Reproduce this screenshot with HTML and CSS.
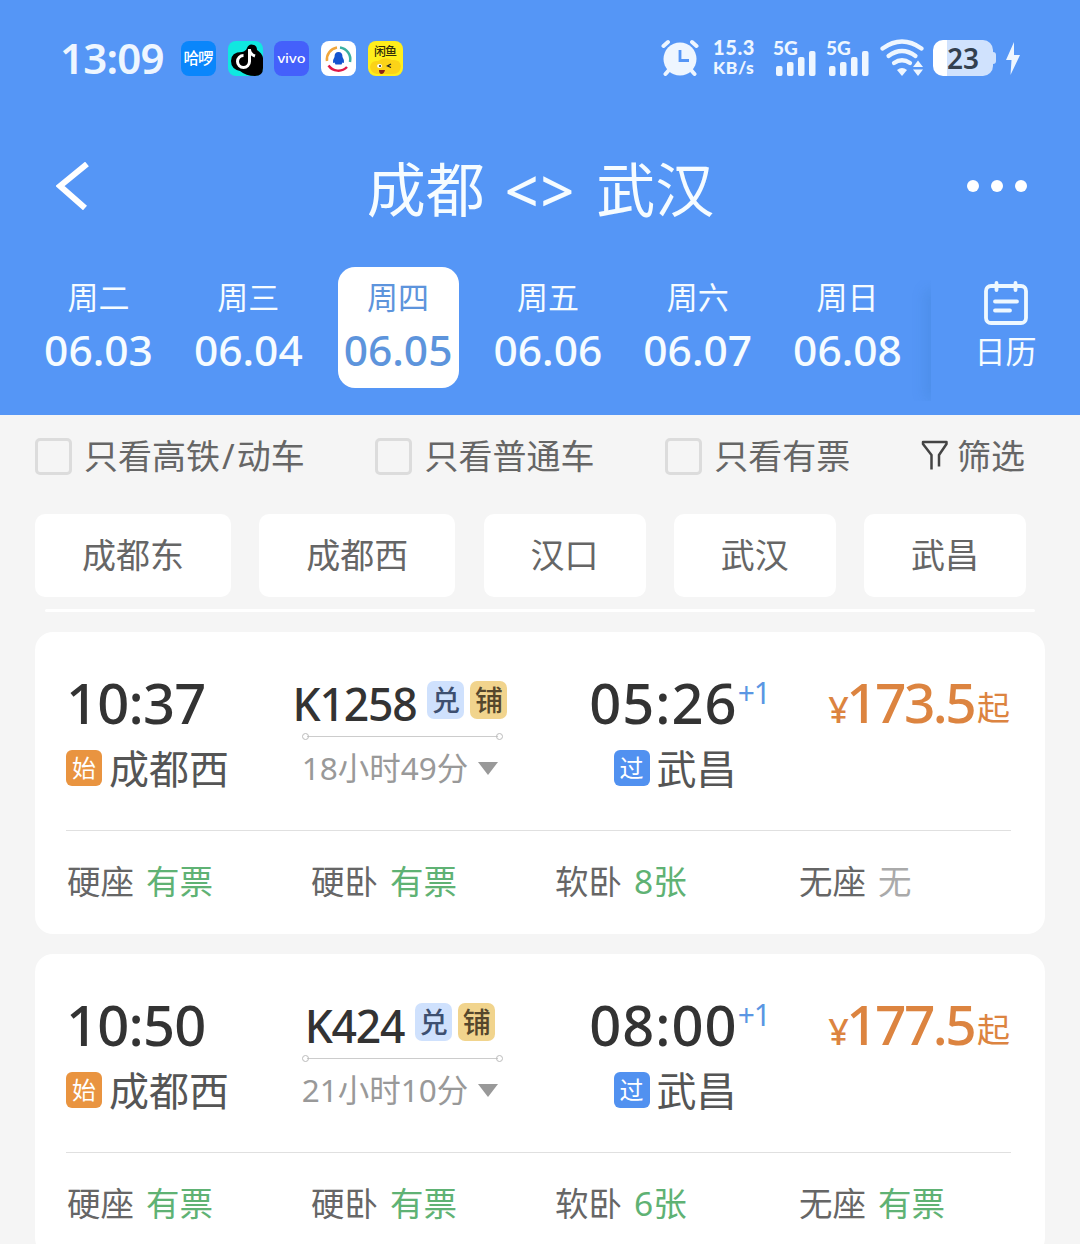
FILE: index.html
```html
<!DOCTYPE html>
<html lang="zh-CN">

<head>
    <meta charset="UTF-8">
    <meta name="viewport" content="width=device-width, initial-scale=1.0">
    <title>成都 - 武汉</title>
    <link rel="stylesheet" href="styles.css">
</head>

<body>
    <header class="header">
        <div class="status-bar">
            <span class="clock">13:09</span>
            <div class="apps">
                <svg class="app" viewBox="0 0 35 35">
                    <rect width="35" height="35" rx="8" fill="#0a86fb" />
                    <text x="17.5" y="23" class="app-text" font-size="15.5" textLength="30" fill="#fff">哈啰</text>
                </svg>
                <svg class="app" viewBox="0 0 35 35">
                    <rect width="35" height="35" rx="8" fill="#10e8e0" />
                    <path d="M19 7q2-5 7-3 3 1 3 5 5 3 6 8v10q0 8-8 8-9 0-15-5-9-2-9-10 0-9 11-9 4-1 5-4z" fill="#000" />
                    <path d="M21.500 8v12.500a6 6 0 1 1-6-6M21.500 9q1 4.500 5.500 6" fill="none" stroke="#fff" stroke-width="3" />
                </svg>
                <svg class="app" viewBox="0 0 35 35">
                    <rect width="35" height="35" rx="8" fill="#4460fb" />
                    <text x="17.5" y="21.500" class="app-text" font-size="12" textLength="28" lengthAdjust="spacingAndGlyphs" fill="#fff">vivo</text>
                </svg>
                <svg class="app" viewBox="0 0 35 35">
                    <rect width="35" height="35" rx="8" fill="#fff" />
                    <g fill="none" stroke-width="2.500">
                        <path d="M6 20A12 12 0 0 1 16 6.500" stroke="#f0a63c" />
                        <path d="M19 6.500A12 12 0 0 1 29 21" stroke="#39b0a2" />
                        <path d="M7.500 24.500A12 12 0 0 0 26 26" stroke="#df1848" />
                    </g>
                    <path d="M17.500 11q4 0 4 5 2 3 1.500 6l-1.500-.5-1 2h-6l-1-2-1.500.5q-.5-3 1.500-6 0-5 4-5z" fill="#1554d0" />
                </svg>
                <svg class="app" viewBox="0 0 35 35">
                    <rect width="35" height="35" rx="8" fill="#ffee1c" />
                    <path d="M2 26q1-7 8-6 7-5 14-1 8-1 9 6-1 8-8 8H9q-6-1-7-7z" fill="#fbd318" />
                    <text x="17.500" y="15" class="app-text" font-size="12" textLength="23" fill="#33300a">闲鱼</text>
                    <ellipse cx="11.500" cy="25" rx="2.500" ry="2" fill="#fff" />
                    <circle cx="12" cy="25" r="1" fill="#222" />
                    <path d="M23 23l-3.500 2 3.500 1.500" fill="none" stroke="#222" stroke-width="1.300" />
                    <path d="M11 29h6q-1 4-3.500 4T11 29z" fill="#8c2416" />
                </svg>
            </div>
            <div class="indicators">
                <svg class="alarm" viewBox="0 0 38 38">
                    <g fill="none" stroke="#eef6ff" stroke-width="4" stroke-linecap="round">
                        <path d="M2.500 7L7 3M35.500 7L31 3M8 31l-3.500 4M30 31l3.500 4" />
                    </g>
                    <circle cx="19" cy="20" r="16.500" fill="#eef6ff" />
                    <path d="M19 11v10.500h9" fill="none" stroke="#5596f6" stroke-width="2.800" />
                </svg>
                <div class="net-speed">
                    <span>15.3</span>
                    <span>KB/s</span>
                </div>
                <div class="signal">
                    <span class="signal-type">5G</span>
                    <svg viewBox="0 0 40 25">
                        <g fill="#eef6ff">
                            <rect x="0" y="15" width="6.500" height="10" rx="2" />
                            <rect x="11" y="11" width="6.500" height="14" rx="2" />
                            <rect x="22" y="6" width="6.500" height="19" rx="2" />
                            <rect x="33" y="0" width="6.500" height="25" rx="2" />
                        </g>
                    </svg>
                </div>
                <div class="signal">
                    <span class="signal-type">5G</span>
                    <svg viewBox="0 0 40 25">
                        <g fill="#eef6ff">
                            <rect x="0" y="15" width="6.500" height="10" rx="2" />
                            <rect x="11" y="11" width="6.500" height="14" rx="2" />
                            <rect x="22" y="6" width="6.500" height="19" rx="2" />
                            <rect x="33" y="0" width="6.500" height="25" rx="2" />
                        </g>
                    </svg>
                </div>
                <svg class="wifi" viewBox="0 0 44 38">
                    <g fill="none" stroke="#eef6ff" stroke-width="4.200" stroke-linecap="round">
                        <path d="M2.500 9.500Q22-4.500 41.500 9.500" />
                        <path d="M8.500 17Q22 7 35.500 17" />
                        <path d="M14 24Q22 18.500 30 24" />
                    </g>
                    <path d="M17 31q5-4 10 0l-5 6z" fill="#eef6ff" />
                    <path d="M33 28l5-6.500 5 6.500zM33 30.500h10L38 37z" fill="#eef6ff" />
                </svg>
                <div class="battery"><span>23</span></div>
                <svg class="bolt" viewBox="0 0 14 33">
                    <path d="M8 0L0 18h5.500L4.500 33 14 13H8z" fill="#eef6ff" />
                </svg>
            </div>
        </div>

        <div class="title-bar">
            <svg class="back" viewBox="0 0 34 48">
                <path d="M31 2L4 24l25 22" fill="none" stroke="#fff" stroke-width="6" />
            </svg>
            <h1>成都 <span class="arrows">&lt;&gt;</span> 武汉</h1>
            <div class="more"><i></i><i></i><i></i></div>
        </div>

        <div class="date-bar">
            <div class="dates">
                <div class="date"><span class="week">周二</span><span class="day">06.03</span></div>
                <div class="date"><span class="week">周三</span><span class="day">06.04</span></div>
                <div class="date active"><span class="week">周四</span><span class="day">06.05</span></div>
                <div class="date"><span class="week">周五</span><span class="day">06.06</span></div>
                <div class="date"><span class="week">周六</span><span class="day">06.07</span></div>
                <div class="date"><span class="week">周日</span><span class="day">06.08</span></div>
            </div>
            <div class="calendar">
                <svg viewBox="0 0 44 44">
                    <g fill="none" stroke="#eef8ff" stroke-width="3.800" stroke-linecap="round">
                        <rect x="2" y="5" width="40" height="37" rx="5" />
                        <path d="M12.500 2v7M31.500 2v7M11 20.500h22M11 29.500h15" />
                    </g>
                </svg>
                <span>日历</span>
            </div>
        </div>
    </header>

    <div class="filters">
        <label class="check"><span class="box"></span>只看高铁<span class="slash">/</span>动车</label>
        <label class="check"><span class="box"></span>只看普通车</label>
        <label class="check"><span class="box"></span>只看有票</label>
        <div class="funnel">
            <svg viewBox="0 0 28 31">
                <path d="M10.500 29.500V15L2 4V2h23.500v2L18 15v11.500" fill="none" stroke="#444" stroke-width="2.500" stroke-linejoin="round" />
            </svg>
            <span>筛选</span>
        </div>
    </div>

    <div class="stations">
        <span class="chip">成都东</span>
        <span class="chip">成都西</span>
        <span class="chip">汉口</span>
        <span class="chip">武汉</span>
        <span class="chip">武昌</span>
    </div>

    <div class="list-edge"></div>

    <main class="trains">
        <section class="card">
            <div class="trip">
                <div class="depart">
                    <div class="time">10:37</div>
                    <div class="place"><b class="tag start">始</b>成都西</div>
                </div>
                <div class="middle">
                    <div class="number">K1258<b class="mark exchange">兑</b><b class="mark berth">铺</b></div>
                    <div class="route-line"></div>
                    <div class="duration">18小时49分<i class="caret"></i></div>
                </div>
                <div class="arrive">
                    <div class="time">05:26<sup>+1</sup></div>
                    <div class="place"><b class="tag pass">过</b>武昌</div>
                </div>
                <div class="price"><small>¥</small>173.5<em>起</em></div>
            </div>
            <div class="seats">
                <div>硬座<span class="yes">有票</span></div>
                <div>硬卧<span class="yes">有票</span></div>
                <div>软卧<span class="yes">8张</span></div>
                <div>无座<span class="no">无</span></div>
            </div>
        </section>

        <section class="card">
            <div class="trip">
                <div class="depart">
                    <div class="time">10:50</div>
                    <div class="place"><b class="tag start">始</b>成都西</div>
                </div>
                <div class="middle">
                    <div class="number">K424<b class="mark exchange">兑</b><b class="mark berth">铺</b></div>
                    <div class="route-line"></div>
                    <div class="duration">21小时10分<i class="caret"></i></div>
                </div>
                <div class="arrive">
                    <div class="time">08:00<sup>+1</sup></div>
                    <div class="place"><b class="tag pass">过</b>武昌</div>
                </div>
                <div class="price"><small>¥</small>177.5<em>起</em></div>
            </div>
            <div class="seats">
                <div>硬座<span class="yes">有票</span></div>
                <div>硬卧<span class="yes">有票</span></div>
                <div>软卧<span class="yes">6张</span></div>
                <div>无座<span class="yes">有票</span></div>
            </div>
        </section>
    </main>
</body>

</html>
```

FILE: styles.css
```css
* {
    box-sizing: border-box;
}

body {
    margin: 0;
    height: 1244px;
    overflow: hidden;
    background-color: #f5f5f5;
    color: #666;
    font-family: "Noto Sans", "Noto Sans CJK SC", sans-serif;
    white-space: nowrap;
}

svg {
    display: block;
    flex-shrink: 0;
}

/* Header */
.header {
    height: 415px;
    background-color: #5596f6;
    color: #f6fcff;
}

.status-bar {
    display: flex;
    align-items: center;
    height: 116px;
    padding: 0 60px 0 60px;
    color: #eef6ff;
}

.clock {
    width: 121px;
    font-size: 42px;
    font-weight: 600;
    line-height: 50px;
    letter-spacing: -0.8px;
}

.apps {
    display: flex;
    gap: 11.7px;
}

.app {
    width: 35px;
    height: 35px;
}

.app-text {
    font-family: "Noto Sans", "Noto Sans CJK SC", sans-serif;
    font-weight: 500;
    text-anchor: middle;
}

.indicators {
    display: flex;
    align-items: center;
    height: 38px;
    margin-left: auto;
}

.alarm {
    width: 38px;
    height: 38px;
}

.net-speed {
    display: flex;
    flex-direction: column;
    width: 45px;
    margin: -3px 15px 0 14px;
    font-family: Lato, "Noto Sans", sans-serif;
    font-size: 20px;
    font-weight: 900;
    line-height: 22px;
    letter-spacing: 0.6px;
}

.net-speed span + span {
    font-size: 17.5px;
    line-height: 20px;
}

.signal {
    width: 43px;
    height: 38px;
    margin-right: 10px;
}

.signal-type {
    display: block;
    height: 12px;
    font-family: Lato, "Noto Sans", sans-serif;
    font-size: 19px;
    font-weight: 900;
    line-height: 17px;
}

.signal svg {
    width: 40px;
    height: 25px;
    margin-left: 3px;
}

.wifi {
    width: 44px;
    height: 38px;
    margin: 0 9px 0 1px;
}

.battery {
    position: relative;
    width: 60px;
    height: 36px;
    margin-right: 13px;
    border-radius: 10px;
    background: linear-gradient(to right, #fff 23%, #d0e2fd 23%);
    color: #33404f;
    font-size: 28px;
    font-weight: 600;
    line-height: 36px;
    text-align: center;
}

.battery::after {
    content: "";
    position: absolute;
    top: 12px;
    right: -3px;
    width: 3px;
    height: 12px;
    border-radius: 0 3px 3px 0;
    background-color: #d0e2fd;
}

.bolt {
    width: 14px;
    height: 33px;
}

.title-bar {
    display: flex;
    align-items: center;
    justify-content: space-between;
    height: 140px;
    padding: 0 53px 0 56px;
}

.back {
    width: 34px;
    height: 48px;
    margin-right: 26px;
}

h1 {
    display: flex;
    align-items: center;
    gap: 20px;
    height: 80px;
    margin: 5px 2px 0 0;
    font-size: 59px;
    font-weight: 400;
    line-height: 80px;
}

.arrows {
    padding-top: 3px;
    font-weight: 500;
    letter-spacing: 2px;
}

.more {
    display: flex;
    gap: 12px;
}

.more i {
    width: 12px;
    height: 12px;
    border-radius: 50%;
    background-color: #fff;
}

.date-bar {
    display: flex;
    margin-top: 11px;
}

.dates {
    display: flex;
    width: 931px;
    padding-left: 38px;
    gap: 28.8px;
}

.date {
    display: flex;
    flex-direction: column;
    align-items: center;
    width: 121px;
    height: 121px;
    border-radius: 17px;
}

.date.active {
    background-color: #fff;
    color: #5d94dc;
}

.week {
    height: 60px;
    font-size: 31px;
    line-height: 60px;
}

.day {
    height: 46px;
    font-size: 42.5px;
    font-weight: 500;
    line-height: 46px;
}

.calendar {
    display: flex;
    flex-direction: column;
    align-items: center;
    width: 149px;
    height: 121px;
    margin-top: 13px;
    box-shadow: -12px 4px 12px -6px rgba(50, 120, 190, 0.22);
    background-color: #5596f6;
    clip-path: inset(0 0 0 -20px);
}

.calendar svg {
    width: 44px;
    height: 44px;
    margin-top: 1px;
}

.calendar span {
    height: 52px;
    font-size: 31px;
    line-height: 52px;
}

/* Filters */
.filters {
    display: flex;
    justify-content: space-between;
    height: 83px;
    padding: 0 55px 0 35px;
    font-size: 34px;
    line-height: 82px;
}

.check,
.funnel {
    display: flex;
    align-items: center;
    height: 81px;
}

.slash {
    margin: 0 2px;
}

.box {
    width: 37px;
    height: 37px;
    margin: 2px 12px 0 0;
    border: 3px solid #dcdcdc;
    border-radius: 5px;
}

.funnel svg {
    width: 28px;
    height: 31px;
    margin-right: 8px;
}

.stations {
    display: flex;
    justify-content: space-between;
    margin-top: 16px;
    padding: 0 54px 0 35px;
}

.chip {
    height: 83px;
    padding: 0 47px;
    border-radius: 10px;
    background-color: #fff;
    font-size: 34px;
    line-height: 82px;
}

.list-edge {
    height: 3px;
    margin: 12px 45px 20px;
    border-radius: 2px;
    background-color: #fff;
}

/* Train list */
.card {
    height: 302px;
    margin: 0 35px 20px;
    padding: 0 34px 0 31px;
    border-radius: 18px;
    background-color: #fff;
}

.trip {
    display: grid;
    grid-template-columns: 214px 240px 60px 190px 1fr;
    height: 199px;
    padding-top: 36px;
    border-bottom: 1px solid #e0e0e0;
}

.time {
    height: 69px;
    color: #333;
    font-size: 56px;
    font-weight: 500;
    line-height: 68px;
    letter-spacing: -0.8px;
}

.arrive {
    grid-column: 4;
}

.arrive .time {
    display: flex;
    justify-content: flex-end;
    letter-spacing: 1px;
}

sup {
    margin-top: -9px;
    color: #5a96e3;
    font-size: 30px;
    font-weight: 400;
    letter-spacing: -1px;
}

.place {
    display: flex;
    align-items: center;
    height: 64px;
    color: #555;
    font-size: 40px;
    line-height: 66px;
}

.arrive .place {
    justify-content: center;
}

.tag {
    width: 36px;
    height: 36px;
    margin: -2px 7px 0 0;
    border-radius: 6px;
    color: #fff;
    font-size: 24px;
    font-weight: 400;
    line-height: 35px;
    text-align: center;
}

.start {
    background-color: #e99440;
}

.pass {
    background-color: #5191f0;
}

.middle {
    display: flex;
    grid-column: 2;
    flex-direction: column;
    align-items: center;
}

.number {
    display: flex;
    align-items: center;
    height: 66px;
    padding-top: 6px;
    color: #333;
    font-size: 44.5px;
    font-weight: 500;
    line-height: 60px;
    letter-spacing: -1.2px;
}

.mark {
    width: 37px;
    height: 38px;
    margin: -8px 0 0 6px;
    border-radius: 7px;
    font-size: 28px;
    font-weight: 500;
    line-height: 38px;
    letter-spacing: 0;
    text-align: center;
}

.exchange {
    margin-left: 11px;
    background-color: #cfe1fd;
    color: #3d4f70;
}

.berth {
    background-color: #f1d48d;
    color: #55472c;
}

/* thin line with a ring at both ends */
.route-line {
    display: flex;
    align-items: center;
    justify-content: space-between;
    width: 201px;
    height: 5px;
    margin-left: 4px;
    background: linear-gradient(#ccc, #ccc) center / 191px 1px no-repeat;
}

.route-line::before,
.route-line::after {
    content: "";
    width: 5px;
    height: 5px;
    border: 1px solid #bbb;
    border-radius: 50%;
}

.duration {
    display: flex;
    align-items: center;
    height: 58px;
    color: #999;
    font-size: 31.5px;
    line-height: 60px;
}

.caret {
    margin-left: 10px;
    border: 10px solid transparent;
    border-top: 13px solid #999;
    border-bottom: 0;
}

.price {
    display: flex;
    align-items: baseline;
    justify-content: flex-end;
    height: 68px;
    margin-right: 1px;
    color: #dc8440;
    font-size: 55px;
    font-weight: 500;
    line-height: 68px;
    letter-spacing: -2.6px;
}

.price small {
    font-size: 36px;
}

.price em {
    margin-left: 3px;
    font-size: 33px;
    font-style: normal;
    font-weight: 400;
    line-height: 60px;
    letter-spacing: 0;
    transform: translateY(-3px);
}

.seats {
    display: grid;
    grid-template-columns: repeat(4, 244px);
    height: 101px;
    padding-left: 1px;
    font-size: 33.5px;
    line-height: 101px;
}

.seats span {
    margin-left: 12px;
}

.yes {
    color: #5fb274;
}

.no {
    color: #aaa;
}
```
